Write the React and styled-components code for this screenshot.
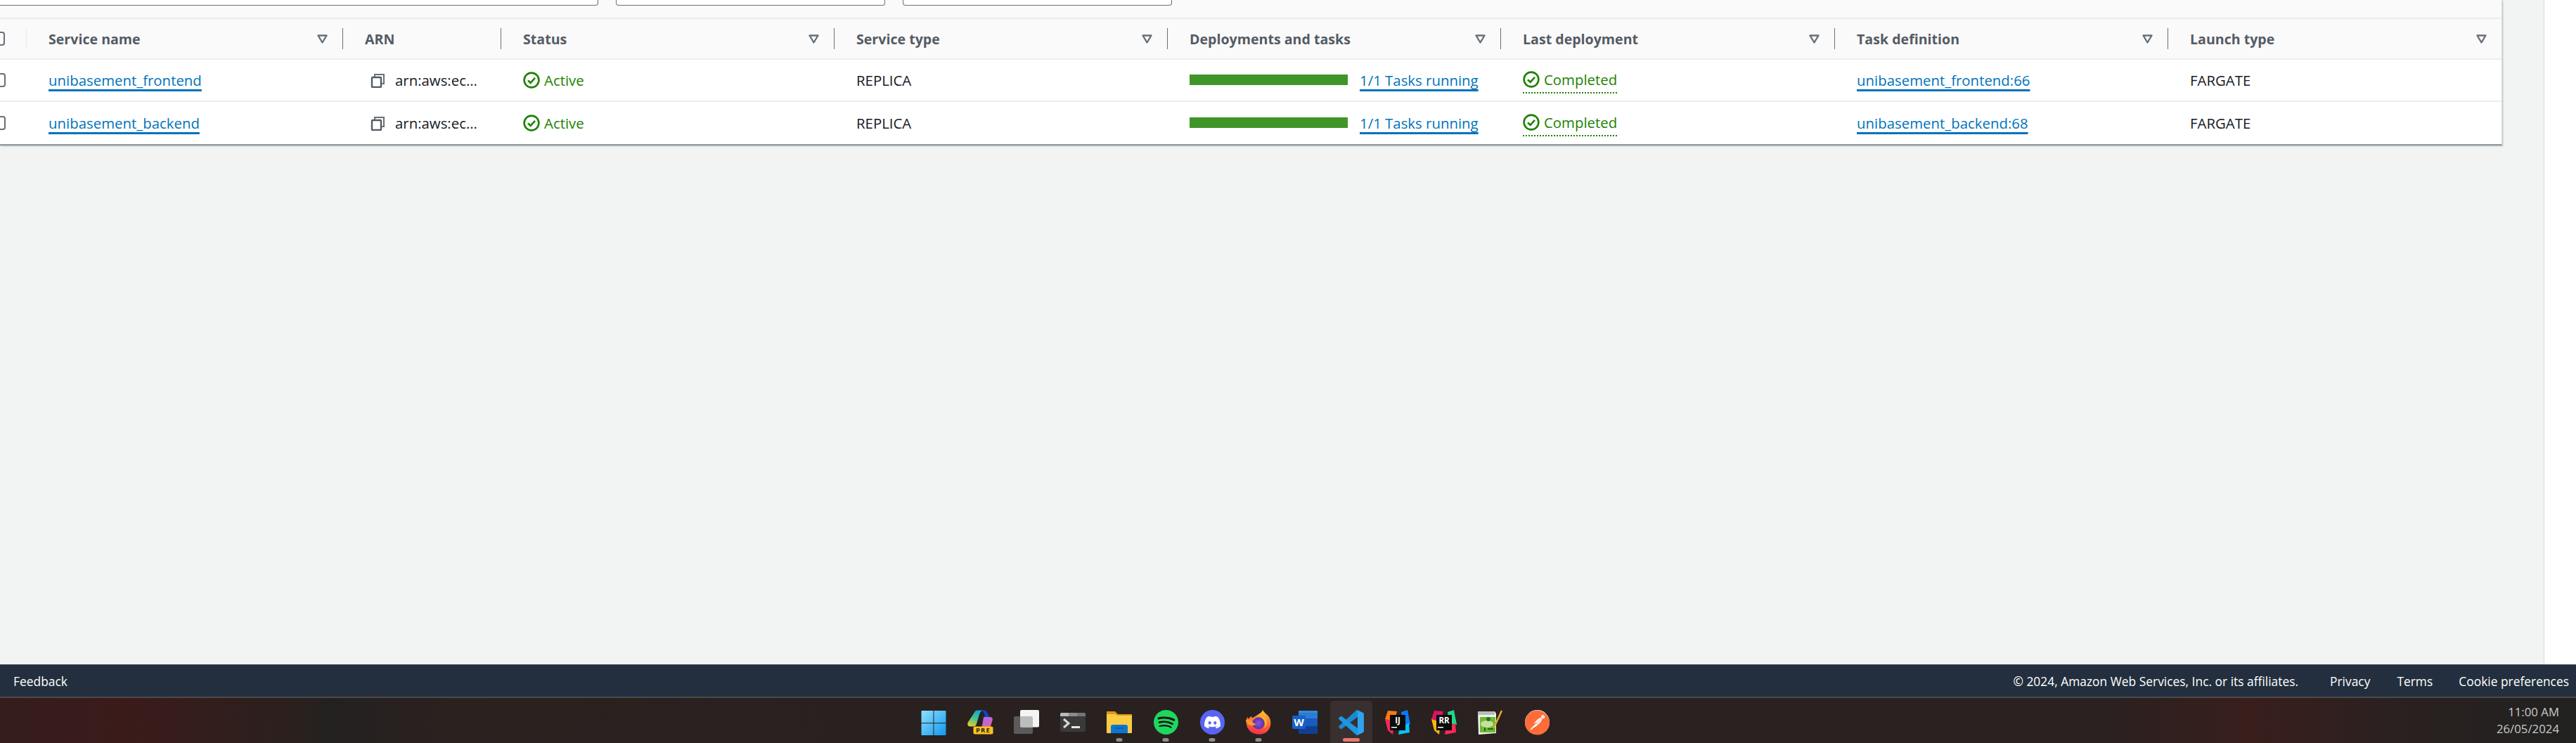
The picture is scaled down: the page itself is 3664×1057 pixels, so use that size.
import React from "react";
import styled, { createGlobalStyle } from "styled-components";
import { SiPostman, SiSpotify, SiDiscord } from "react-icons/si";

const Global = createGlobalStyle`
  html, body { margin: 0; padding: 0; background: #fff; }
  body { font-family: "Open Sans", "Noto Sans", sans-serif; overflow: hidden; }
  * { box-sizing: border-box; }
`;

const Page = styled.div`
  width: 3664px; height: 1057px; display: flex; flex-direction: column; overflow: hidden;
`;
const Main = styled.div`display: flex; height: 945px; flex: none;`;
const Content = styled.main`width: 3618px; background: #f2f3f3; flex: none;`;
const Gutter = styled.aside`flex: 1; background: #fff; border-left: 1px solid #d5dbdb;`;
const Card = styled.section`
  width: 3559px; background: #fff; border-right: 1px solid #d5dbdb;
  border-bottom: 2px solid #8d979c; box-shadow: 1px 1px 2px rgba(0,28,36,.25);
`;
const FilterBar = styled.div`
  height: 27px; background: #fafafa; border-bottom: 2px solid #eaeded; display: flex; align-items: flex-start; overflow: hidden;
`;
const FilterInput = styled.div`
  height: 8px; width: ${p => p.$w}px; margin-left: ${p => p.$ml}px; background: #fff;
  border: 1px solid #687078; border-top: 0; border-radius: 0 0 4px 4px; flex: none;
`;
const cols = "38px 450px 225px 474px 474px 474px 475px 474px 474px";
const HeadRow = styled.div`
  display: grid; grid-template-columns: ${cols}; height: 58px; background: #fafafa;
  border-bottom: 2px solid #eaeded; align-items: center;
`;
const BodyRow = styled.div`
  display: grid; grid-template-columns: ${cols}; height: 60px; background: #fff; align-items: center;
  border-bottom: ${p => (p.$last ? "0" : "2px solid #eaeded")};
`;
const SelectCell = styled.div`display: flex; justify-content: flex-end; padding-right: 30px; height: 100%; align-items: center;`;
const Box = styled.span`
  width: 20px; height: 20px; border: 2px solid #687078; border-radius: 4px; background: #fff; flex: none;
`;
const HeadCell = styled.div`
  height: 30px; display: flex; align-items: center; justify-content: space-between;
  padding: 0 21px 0 31px; font-size: 19.6px; font-weight: 700; color: #545b64;
  border-right: ${p => (p.$end ? "0" : "1px solid #687078")};
  white-space: nowrap;
`;
const SelectHead = styled(HeadCell)`padding: 0 30px 0 0; justify-content: flex-end; border-right: 1px solid #eaeded;`;
const Cell = styled.div`
  display: flex; align-items: center; padding-left: 31px; font-size: 20.4px; color: #16191f; white-space: nowrap; height: 100%;
`;
const CopyCell = styled(Cell)`padding-left: 39px; gap: 14px;`;
const StatusCell = styled(Cell)`gap: 6px; color: #1d8102;`;
const DeployCell = styled(Cell)`gap: 17px;`;
const Link = styled.a`
  color: #0073bb; text-decoration: underline; text-decoration-thickness: 3px; text-underline-offset: 5px;
`;
const Bar = styled.span`width: 225px; height: 15px; background: #3f9528; flex: none; margin-top: -1px;`;
const Completed = styled.span`
  display: inline-flex; align-items: flex-start; gap: 6px; color: #1d8102; height: 32px; margin-top: 5px;
  border-bottom: 2px dotted #1d8102; line-height: 24px;
`;

const Footer = styled.footer`
  height: 46px; background: #232f3e; border-top: 1px solid #545b64; display: flex; align-items: center; flex: none;
  padding: 0 10px 0 19px; color: #fff; font-size: 17.4px;
`;
const FooterText = styled.span`margin-left: ${p => p.$ml || 0}px; white-space: nowrap;`;
const FooterSpacer = styled.div`flex: 1;`;

const Taskbar = styled.div`
  height: 66px; flex: none; border-top: 2px solid #4b4a4a; display: flex; align-items: stretch; padding: 0 24px 0 1295px;
  background: linear-gradient(90deg, #341d1c 0, #3a1b1a 180px, #2a201e 420px, #232120 470px, #2b211f 640px, #282120 1500px, #2a2120 2400px, #2a2120 3000px, #391e1c 3200px, #2a2120 3400px, #212120 3664px);
`;
const Slot = styled.div`
  width: 66px; flex: none; display: flex; align-items: center; justify-content: center; position: relative;
`;
const ActiveBack = styled.div`
  position: absolute; left: 3px; right: 3px; top: 4px; bottom: 0; background: rgba(255,255,255,.07); border-radius: 5px 5px 0 0;
`;
const Dot = styled.span`
  position: absolute; bottom: 2px; left: 50%; transform: translateX(-50%); height: 5px; border-radius: 3px;
  width: ${p => (p.$active ? 24 : 9)}px; background: ${p => (p.$active ? "#e9776a" : "#8e8e8e")};
`;
const Clock = styled.div`
  margin-left: auto; display: flex; flex-direction: column; align-items: flex-end; justify-content: center; gap: 4px;
  color: #c9c9c9; font-size: 16.8px; line-height: 20px;
`;
const IconSvg = styled.svg`width: 38px; height: 38px; display: block; margin-top: 5px; overflow: visible;`;
const Badge = styled.span`
  width: 35px; height: 35px; margin-top: 5px; border-radius: 50%; background: ${p => p.$bg};
  display: flex; align-items: center; justify-content: center; color: ${p => p.$fg}; flex: none;
  svg { display: block; }
`;

const Caret = () => (
  <svg width="15" height="13" viewBox="0 0 15 13" fill="none" style={{ flex: "none" }}>
    <path d="M1.500 1.500h12L7.500 11.500z" stroke="#687078" strokeWidth="2.400" strokeLinejoin="round" fill="#fafafa" />
  </svg>
);
const Copy = () => (
  <svg width="21" height="21" viewBox="0 0 21 21" fill="none" style={{ flex: "none" }}>
    <path d="M6 5V2h13v13h-3" stroke="#687078" strokeWidth="2" />
    <rect x="2" y="6" width="13" height="14" rx="1" stroke="#545b64" strokeWidth="2.400" />
  </svg>
);
const Check = () => (
  <svg width="24" height="24" viewBox="0 0 24 24" fill="none" style={{ flex: "none" }}>
    <circle cx="12" cy="12" r="10.400" stroke="#1d8102" strokeWidth="2.600" />
    <path d="M7 12.400l3.600 3.400 6.400-7" stroke="#1d8102" strokeWidth="2.600" />
  </svg>
);

const Win = () => (
  <IconSvg viewBox="0 0 38 38">
    <defs><linearGradient id="w" x1="0" y1="0" x2="1" y2="1"><stop offset="0" stopColor="#8fe0ff" /><stop offset="1" stopColor="#0f97ef" /></linearGradient></defs>
    <path fill="url(#w)" d="M1.500 3a1 1 0 0 1 1-1H18.500v17.200h-17zM19.500 2H35.500a1 1 0 0 1 1 1v16.200h-17zM1.500 20.200h17V37H2.500a1 1 0 0 1-1-1zM19.500 20.200h17V36a1 1 0 0 1-1 1H19.500z" />
  </IconSvg>
);
const CopilotIcon = () => (
  <IconSvg viewBox="0 0 38 38">
    <defs>
      <linearGradient id="c1" x1="0.600" y1="0" x2="0.200" y2="1"><stop offset="0" stopColor="#16a3e0" /><stop offset=".45" stopColor="#3fc68e" /><stop offset="1" stopColor="#f0c72e" /></linearGradient>
      <linearGradient id="c2" x1="0.200" y1="0" x2="0.800" y2="1"><stop offset="0" stopColor="#9c6ff0" /><stop offset="1" stopColor="#f25f9c" /></linearGradient>
    </defs>
    <path fill="url(#c1)" d="M12 3c1-1 2-1.500 4-1.500h7c-3 1-4 3-5 6l-4 13c-1 3-2 4-5 4H5c-3 0-4.500-2.500-3.500-5.500z" />
    <path fill="#1c3fc4" d="M21 1.500h3c3 0 5 2 6 4.500l2 5h-6c-1-5-2-8-5-9.500z" />
    <path fill="url(#c2)" d="M24 11h9c3 0 4.500 2 3.500 5l-2.500 8c-1 3-3 5-6 5h-10c2-1 3-3 4-6z" />
    <rect x="9.500" y="24.500" width="28" height="11" rx="2" fill="#fcc21a" />
    <text x="23.500" y="33.300" textAnchor="middle" fontFamily="Open Sans" fontWeight="700" fontSize="9.400" letterSpacing="1.300" fill="#222">PRE</text>
  </IconSvg>
);
const TaskView = () => (
  <IconSvg viewBox="0 0 38 38">
    <rect x="1" y="10" width="27" height="25" rx="2" fill="#5b5b5b" />
    <rect x="10" y="1" width="27" height="24.500" rx="2" fill="#f4f4f4" />
    <path fill="#bdbdbd" d="M10 10h16a2 2 0 0 1 2 2v13.500H12a2 2 0 0 1-2-2z" />
  </IconSvg>
);
const Terminal = () => (
  <IconSvg viewBox="0 0 38 38">
    <rect x="1" y="5" width="36" height="27" rx="2" fill="#3a3a3a" />
    <path fill="#b9b9b9" d="M3 5h10v5H1V7a2 2 0 0 1 2-2z" />
    <rect x="13" y="5" width="12" height="5" fill="#8c8c8c" />
    <path fill="#757575" d="M25 5h10a2 2 0 0 1 2 2v3H25z" />
    <path d="M6 14l7 6-7 6" stroke="#d8d8d8" strokeWidth="3" fill="none" />
    <rect x="17" y="24" width="12" height="3" fill="#e8e8e8" />
  </IconSvg>
);
const Folder = () => (
  <IconSvg viewBox="0 0 38 38">
    <path fill="#d99a10" d="M1 3h12l4 4h20v6H1z" />
    <path fill="#fbcb43" d="M1 7h12l3 2h21v24a1 1 0 0 1-1 1H2a1 1 0 0 1-1-1z" />
    <path fill="#0a78cf" d="M7 25a3 3 0 0 1 3-3h18a3 3 0 0 1 3 3v9H7z" />
    <rect x="13" y="26" width="12" height="1.500" fill="#1a4f9e" />
  </IconSvg>
);
const Spotify = () => <Badge $bg="#141414" $fg="#1ed760"><SiSpotify size={35} /></Badge>;
const Discord = () => <Badge $bg="#5865f2" $fg="#fff"><SiDiscord size={23} /></Badge>;
const Firefox = () => (
  <IconSvg viewBox="0 0 38 38">
    <defs>
      <linearGradient id="ff" x1="0.700" y1="0" x2="0.500" y2="1"><stop offset="0" stopColor="#ffc93a" /><stop offset=".45" stopColor="#ff7a2b" /><stop offset="1" stopColor="#f0304c" /></linearGradient>
      <radialGradient id="fp"><stop offset="0" stopColor="#8a55e0" /><stop offset="1" stopColor="#5a2fa8" /></radialGradient>
    </defs>
    <path fill="url(#ff)" d="M25 1c2 4 6 6 9 10 4 7 3 15-3 21-6 5-16 5-23 0C2 27 0 19 3 11l2 3c1-2 2-3 4-4 0 2 1 2 2 2 3-2 6-3 8-5 3-2 5-3 6-6z" />
    <circle cx="19" cy="20" r="8.500" fill="url(#fp)" />
    <path fill="#ff9a2e" d="M1 15c4-1 7 0 9 3 2 2 4 3 6 3-2 2-7 3-10 1-3-1-5-4-5-7z" />
    <path fill="#ffb02e" d="M19 7c5 0 11 3 12 10 .5 4-1 8-4 10 2-4 2-8 0-11-2-4-5-6-8-9z" />
  </IconSvg>
);
const Word = () => (
  <IconSvg viewBox="0 0 38 38">
    <path fill="#2b7cd3" d="M10 2h26a1 1 0 0 1 1 1v10H10z" />
    <rect x="10" y="13" width="27" height="11" fill="#185abd" />
    <path fill="#103f91" d="M10 24h27v10a1 1 0 0 1-1 1H11a1 1 0 0 1-1-1z" />
    <path fill="#41a5ee" d="M10 2h26a1 1 0 0 1 1 1v2H10z" opacity=".4" />
    <rect x="1" y="9" width="19" height="19" rx="2" fill="#1a5fc8" />
    <text x="10.500" y="24" textAnchor="middle" fontFamily="Open Sans" fontWeight="700" fontSize="15" fill="#fff">W</text>
  </IconSvg>
);
const VSCode = () => (
  <IconSvg viewBox="-3 -3 106 106">
    <path fill="#0a7fcd" d="M96.461 10.796L75.857 0.876C73.472-0.273 70.622 0.212 68.75 2.084L1.299 63.583c-1.814 1.654-1.812 4.510 0.004 6.162l5.510 5.009c1.485 1.350 3.722 1.450 5.322 0.236L93.361 13.483c2.720-2.063 6.627-0.123 6.627 3.291v-0.239c0-2.397-1.373-4.581-3.527-5.619z" />
    <path fill="#0e8ee0" d="M96.461 89.204L75.857 99.124c-2.385 1.149-5.235 0.664-7.107-1.208L1.299 36.417c-1.814-1.654-1.812-4.510 0.004-6.162l5.510-5.009c1.485-1.350 3.722-1.450 5.322-0.236l81.226 61.507c2.720 2.063 6.627 0.123 6.627-3.291v0.239c0 2.397-1.373 4.581-3.527 5.619z" />
    <path fill="#1f9cf0" d="M75.858 99.126C73.472 100.274 70.622 99.788 68.750 97.916C71.056 100.222 75 98.589 75 95.328V4.672C75 1.411 71.056-0.222 68.750 2.084C70.622 0.212 73.472-0.275 75.858 0.873L96.458 10.780C98.623 11.821 100 14.011 100 16.413V83.588C100 85.989 98.623 88.179 96.458 89.220L75.858 99.126Z" />
  </IconSvg>
);
const JetBrains = ({ label, colors }) => (
  <IconSvg viewBox="0 0 38 38">
    <polygon points="5,2 18,3 14,18 1,14" fill={colors[0]} />
    <polygon points="24,4 33,1 37,22 26,20" fill={colors[1]} />
    <polygon points="1,14 14,18 12,36 5,30" fill={colors[2]} />
    <polygon points="22,24 35,20 36,33 20,36" fill={colors[3]} />
    <rect x="8" y="8" width="22" height="22" fill="#0b0b0b" />
    <text x="19" y="20" textAnchor="middle" fontFamily="Open Sans" fontWeight="700" fontSize="11.500" fill="#fff">{label}</text>
    <rect x="10" y="25" width="8" height="1.500" fill="#fff" />
  </IconSvg>
);
const NotepadPP = () => (
  <IconSvg viewBox="0 0 38 38">
    <path fill="#eef3ea" d="M1 3h24l2 3v28L2 36z" />
    <rect x="1" y="3" width="24" height="5" fill="#b9bdb6" />
    <rect x="4" y="11" width="22" height="22" fill="#6cbb35" />
    <ellipse cx="14" cy="21" rx="9" ry="5" fill="#c5e29b" />
    <circle cx="16" cy="14" r="3" fill="#3a6b24" />
    <path d="M24 26 35 2" stroke="#e5aa28" strokeWidth="2.500" />
    <path d="M11 26v5M15 28h8" stroke="#253a1c" strokeWidth="1.500" />
  </IconSvg>
);
const Postman = () => <Badge $bg="#fff" $fg="#ff6c37"><SiPostman size={36} /></Badge>;

const heads = ["Service name", "ARN", "Status", "Service type", "Deployments and tasks", "Last deployment", "Task definition", "Launch type"];
const rows = [
  { name: "unibasement_frontend", task: "unibasement_frontend:66" },
  { name: "unibasement_backend", task: "unibasement_backend:68" },
];
const apps = [
  { el: <Win /> }, { el: <CopilotIcon /> }, { el: <TaskView /> }, { el: <Terminal /> },
  { el: <Folder />, dot: true }, { el: <Spotify />, dot: true }, { el: <Discord />, dot: true }, { el: <Firefox />, dot: true },
  { el: <Word /> }, { el: <VSCode />, active: true },
  { el: <JetBrains label="IJ" colors={["#f97a12", "#087cfa", "#fe2857", "#07c3f2"]} /> },
  { el: <JetBrains label="RR" colors={["#dd1265", "#21d789", "#fdb60d", "#fe2857"]} /> },
  { el: <NotepadPP /> }, { el: <Postman /> },
];

export default function App() {
  return (
    <Page>
      <Global />
      <Main>
        <Content>
          <Card>
            <FilterBar>
              <FilterInput $w={861} $ml={-10} />
              <FilterInput $w={383} $ml={25} />
              <FilterInput $w={383} $ml={25} />
            </FilterBar>
            <HeadRow>
              <SelectHead><Box /></SelectHead>
              {heads.map((h, i) => (
                <HeadCell key={h} $end={i === heads.length - 1}>
                  {h}
                  {h !== "ARN" && <Caret />}
                </HeadCell>
              ))}
            </HeadRow>
            {rows.map((r, i) => (
              <BodyRow key={r.name} $last={i === 1}>
                <SelectCell><Box /></SelectCell>
                <Cell><Link>{r.name}</Link></Cell>
                <CopyCell><Copy />arn:aws:ec…</CopyCell>
                <StatusCell><Check />Active</StatusCell>
                <Cell>REPLICA</Cell>
                <DeployCell><Bar /><Link>1/1 Tasks running</Link></DeployCell>
                <Cell><Completed><Check /><span>Completed</span></Completed></Cell>
                <Cell><Link>{r.task}</Link></Cell>
                <Cell>FARGATE</Cell>
              </BodyRow>
            ))}
          </Card>
        </Content>
        <Gutter />
      </Main>
      <Footer>
        <FooterText>Feedback</FooterText>
        <FooterSpacer />
        <FooterText>© 2024, Amazon Web Services, Inc. or its affiliates.</FooterText>
        <FooterText $ml={45}>Privacy</FooterText>
        <FooterText $ml={38}>Terms</FooterText>
        <FooterText $ml={37}>Cookie preferences</FooterText>
      </Footer>
      <Taskbar>
        {apps.map((a, i) => (
          <Slot key={i}>
            {a.active && <ActiveBack />}
            {a.el}
            {(a.dot || a.active) && <Dot $active={a.active} />}
          </Slot>
        ))}
        <Clock><span>11:00 AM</span><span>26/05/2024</span></Clock>
      </Taskbar>
    </Page>
  );
}
